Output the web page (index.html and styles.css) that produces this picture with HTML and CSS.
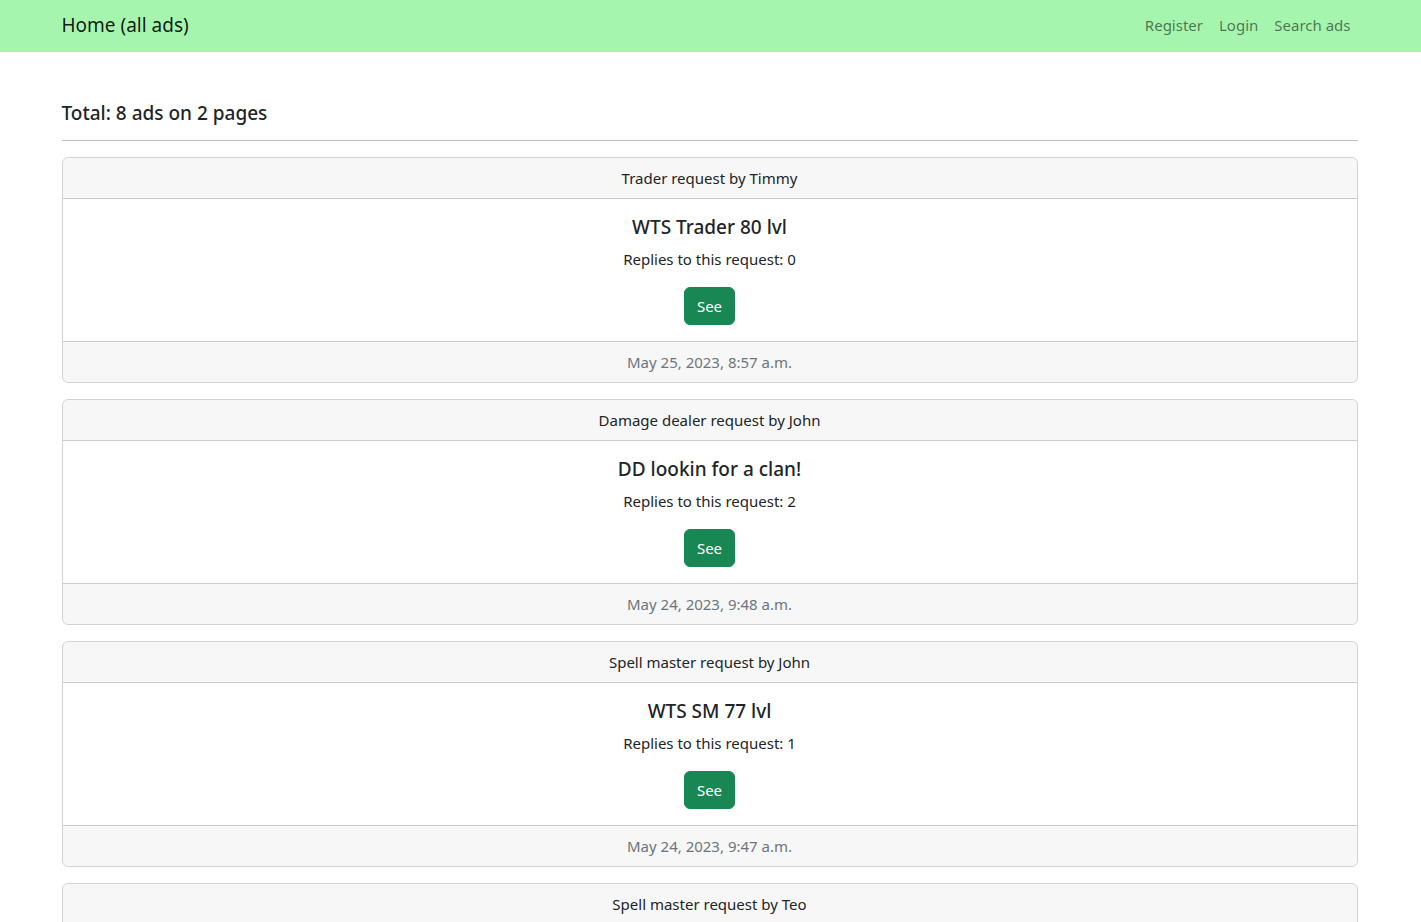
FILE: index.html
```html
<!DOCTYPE html>
<html lang="en">
<head>
<meta charset="utf-8">
<title>Home (all ads)</title>
<link rel="stylesheet" href="styles.css">
</head>
<body>
<nav class="navbar">
  <div class="container nav-inner">
    <a class="brand" href="#">Home (all ads)</a>
    <ul class="nav-links">
      <li><a href="#">Register</a></li>
      <li><a href="#">Login</a></li>
      <li><a href="#">Search ads</a></li>
    </ul>
  </div>
</nav>
<main class="container main">
  <h5 class="total">Total: 8 ads on 2 pages</h5>
  <hr class="divider">
  <div class="card">
    <div class="card-header">Trader request by Timmy</div>
    <div class="card-body">
      <h5 class="card-title">WTS Trader 80 lvl</h5>
      <p class="card-text">Replies to this request: 0</p>
      <a class="btn" href="#">See</a>
    </div>
    <div class="card-footer">May 25, 2023, 8:57 a.m.</div>
  </div>
  <div class="card">
    <div class="card-header">Damage dealer request by John</div>
    <div class="card-body">
      <h5 class="card-title">DD lookin for a clan!</h5>
      <p class="card-text">Replies to this request: 2</p>
      <a class="btn" href="#">See</a>
    </div>
    <div class="card-footer">May 24, 2023, 9:48 a.m.</div>
  </div>
  <div class="card">
    <div class="card-header">Spell master request by John</div>
    <div class="card-body">
      <h5 class="card-title">WTS SM 77 lvl</h5>
      <p class="card-text">Replies to this request: 1</p>
      <a class="btn" href="#">See</a>
    </div>
    <div class="card-footer">May 24, 2023, 9:47 a.m.</div>
  </div>
  <div class="card">
    <div class="card-header">Spell master request by Teo</div>
    <div class="card-body">
      <h5 class="card-title">WTS SM 70 lvl</h5>
      <p class="card-text">Replies to this request: 0</p>
      <a class="btn" href="#">See</a>
    </div>
    <div class="card-footer">May 23, 2023, 9:00 a.m.</div>
  </div>
</main>
</body>
</html>
```
FILE: styles.css
```css
* { box-sizing: border-box; }
html, body { margin: 0; padding: 0; }
body {
  font-family: "Noto Sans", "Open Sans", sans-serif;
  font-size: 15px;
  line-height: 24px;
  color: #212529;
  background: #fff;
}
a { text-decoration: none; }
.container {
  max-width: 1320px;
  margin: 0 auto;
  padding: 0 12px;
}
.navbar {
  background: #a6f5ae;
  height: 52px;
}
.nav-inner {
  display: flex;
  align-items: center;
  justify-content: space-between;
  height: 52px;
  padding-left: 11px;
}
.brand {
  font-size: 19px;
  line-height: 30px;
  margin-top: -2px;
  color: rgba(0,0,0,.9);
}
.nav-links {
  list-style: none;
  margin: -2px 0 0;
  padding: 0;
  display: flex;
}
.nav-links a {
  display: block;
  padding: 8px 8px;
  color: rgba(0,0,0,.55);
}
.main { padding-top: 49px; padding-left: 11px; padding-right: 13px; }
.total {
  font-size: 19px;
  font-weight: 500;
  line-height: 24px;
  margin: 0;
}
.divider {
  margin: 15px 0 16px;
  border: 0;
  border-top: 1px solid rgba(0,0,0,.25);
  height: 0;
}
.card {
  border: 1px solid rgba(0,0,0,.175);
  border-radius: 6px;
  margin-bottom: 16px;
  text-align: center;
  overflow: hidden;
}
.card-header {
  padding: 8px 16px;
  background: rgba(0,0,0,.03);
  border-bottom: 1px solid rgba(0,0,0,.175);
}
.card-body { padding: 16px; }
.card-title {
  font-size: 19px;
  font-weight: 500;
  line-height: 24px;
  margin: 0 0 8px;
}
.card-text { margin: 0 0 16px; }
.btn {
  display: inline-block;
  padding: 6px 12px;
  border: 1px solid #198754;
  border-radius: 6px;
  background: #198754;
  color: #fff;
  line-height: 24px;
}
.card-footer {
  padding: 8px 16px;
  background: rgba(0,0,0,.03);
  border-top: 1px solid rgba(0,0,0,.175);
  color: #6c757d;
}
```
